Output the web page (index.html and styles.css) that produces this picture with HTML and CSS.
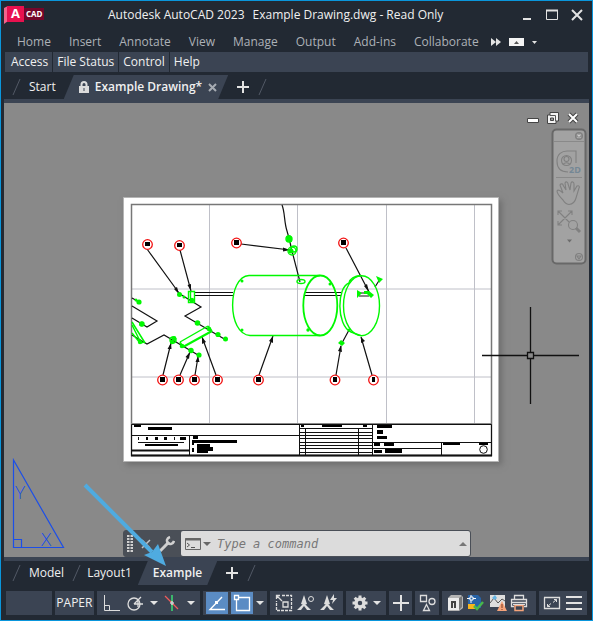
FILE: index.html
```html
<!DOCTYPE html>
<html lang="en">
<head>
<meta charset="utf-8">
<title>Autodesk AutoCAD 2023</title>
<link rel="stylesheet" href="styles.css">
</head>
<body>
<div class="window">
  <header class="titlebar">
    <svg class="logo" width="41" height="20" viewBox="4 6 41 20" aria-label="ACAD">
      <path d="M4 9L8 7V22L4 25Z" fill="#f0648c"/>
      <path d="M7 7H24V23H7Z" fill="#e8114f"/>
      <path d="M24 9H44V21H24Z" fill="#74062a"/>
      <text x="11" y="19" class="logo-a">A</text>
      <text x="26" y="18" class="logo-cad">CAD</text>
    </svg>
    <h1 class="title"><span>Autodesk AutoCAD 2023</span><span>Example Drawing.dwg - Read Only</span></h1>
    <div class="window-buttons">
      <button aria-label="Minimize"><svg width="12" height="12"><path d="M2 10H10" stroke="#e3e3e3" stroke-width="2"/></svg></button>
      <button aria-label="Maximize"><svg width="12" height="12"><path d="M.5 1.5H11.500V10.500H.5Z" fill="none" stroke="#e3e3e3"/><path d="M0 1.500H12" stroke="#e3e3e3" stroke-width="2"/></svg></button>
      <button aria-label="Close"><svg width="12" height="12"><path d="M1 1L11 11M11 1L1 11" stroke="#e3e3e3" stroke-width="2"/></svg></button>
    </div>
  </header>
  <nav class="ribbon">
    <button>Home</button><button>Insert</button><button>Annotate</button><button>View</button><button>Manage</button><button>Output</button><button>Add-ins</button><button>Collaborate</button>
    <span class="ribbon-tools">
      <button aria-label="More tabs"><svg width="10" height="8"><path d="M0 0L5 4L0 8ZM5 0L10 4L5 8Z" fill="#e3e3e3"/></svg></button>
      <button aria-label="Minimize ribbon"><svg width="15" height="8"><path d="M0 0H15V8H0Z" fill="#f4f4f4"/><path d="M5 6L7.500 3L10 6Z" fill="#555"/></svg></button>
      <button aria-label="Ribbon options"><svg width="5" height="8"><path d="M0 3H5L2.500 6Z" fill="#e3e3e3"/></svg></button>
    </span>
  </nav>
  <nav class="panels"><button>Access</button><button>File Status</button><button>Control</button><button>Help</button></nav>

  <div class="tabs file-tabs">
    <svg class="slash" width="9" height="16"><path d="M1 16L8 0" stroke="#525966"/></svg>
    <button class="tab start">Start</button>
    <div class="tab active">
      <svg width="10" height="12"><path d="M2.500 6V3.500a2.500 2.500 0 0 1 5 0V6" fill="none" stroke="#dcdcdc" stroke-width="2"/><path d="M0 5H10V12H0Z" fill="#dcdcdc"/><path d="M5 7V10" stroke="#3b4453"/></svg>
      <button>Example Drawing*</button>
      <button class="close" aria-label="Close drawing"><svg width="9" height="9"><path d="M1 1L8 8M8 1L1 8" stroke="#a7acb3" stroke-width="2"/></svg></button>
    </div>
    <button class="add" aria-label="New drawing"><svg width="12" height="12"><path d="M6 0V12M0 6H12" stroke="#e3e3e3" stroke-width="2"/></svg></button>
    <svg class="slash" width="9" height="16"><path d="M1 16L8 0" stroke="#525966"/></svg>
  </div>

  <main class="canvas">
    <svg class="paper" width="376" height="265" viewBox="123 197 376 265" aria-label="Drawing sheet">
      <path d="M123.500 197.500H498.500V461.500H123.500Z" fill="#fff" stroke="#b5b5b5"/>
      <path d="M209.500 205V423M297.500 205V423M386.500 205V423M474.500 205V423M132 289H491M132 377H491" stroke="#bfc0c8"/>
      <path d="M131.500 204.500H491.500V455.500H131.500Z" fill="none" stroke="#777" stroke-width="1.500"/>

      <g fill="none" stroke="#111" stroke-width="1.200">
        <path d="M147 249L179 293M180 250L191 291M241 244L290 250M346 248L369 292M163 375L171 343M180 375L190 352M195 375L198 357M216 375L202 337M259 375L273 336M336 375L341 346M372 375L361 337"/>
        <path d="M282 205C285 212 284 222 287 231L289 238L292 251L300 282M195 292.500H233M195 295.500H233M305 292.500H341M305 295.500H341M359 293H369M359 296H369M375 287L380 279M349 330L342 343"/>
        <path d="M180 294L201 307L185 316L226 340M132 306L157 321L147 327L132 318M132 335L147 344L164 335L198 355M132 298L139 302"/>
      </g>
      <path d="M179 294L174 289L177 287ZM191 291L187.500 285L191 284ZM290 250L283 251.500V247.500ZM369 292L364 286L367 284ZM171 343L167.500 349H171.500ZM190 352L185.500 357L189 359ZM198 356L195.500 362H199.500ZM202 337L202 344L206 342ZM273 336L269 341L273 343ZM341 345L338 351L342 352ZM361 337L361 343L365 341Z" fill="#111"/>

      <g fill="none" stroke="#00f800" stroke-width="1.400">
        <path d="M320 275.500H249C227 277 227 334 250 335.500H320"/>
        <ellipse cx="320.300" cy="305.500" rx="17" ry="30" stroke-width="1.800"/>
        <ellipse cx="361.500" cy="305.700" rx="18" ry="30"/>
        <path d="M361 275.500C354 276 350 279 349 283C337 287 336 325 351 332L361 335.700"/>
        <ellipse cx="301" cy="281.500" rx="4" ry="2"/>
        <path d="M188.500 291.500H194.500V302.500H188.500ZM190.500 292V302"/>
        <path d="M180 342L208 326"/><path d="M183 347L212 331" stroke-width="2"/>
        <path d="M208 326L212 331M180 342L183 347M132 325L140 341M132 333L140 343L145 342M132 322L145 343" stroke-width="1.500"/>
        <circle cx="289" cy="239" r="3"/><circle cx="292" cy="251" r="4"/><circle cx="294" cy="249" r="3"/>
        <circle cx="142" cy="324" r="2"/><circle cx="173" cy="340" r="3"/>
      </g>
      <g class="fittings" fill="#00f800">
        <circle cx="289" cy="239" r="2.500"/><circle cx="291" cy="251" r="2.500"/><path d="M286 236L290 235L292 238V242L287 241Z"/>
        <circle cx="179.500" cy="294.500" r="2.500"/><circle cx="184" cy="297" r="1.500"/><circle cx="192" cy="300" r="2.200"/>
        <circle cx="139" cy="302" r="2.600"/><circle cx="136" cy="300" r="1.500"/>
        <circle cx="141.500" cy="324" r="2.500"/><circle cx="197.500" cy="323" r="2.800"/><circle cx="209" cy="329" r="2.300"/><circle cx="218" cy="334.500" r="2.600"/><circle cx="225.500" cy="339" r="2.500"/>
        <circle cx="174" cy="338.500" r="2.400"/><circle cx="172" cy="342" r="2.200"/><circle cx="182" cy="346" r="2.300"/><circle cx="191" cy="350.500" r="2.700"/><circle cx="199" cy="355" r="2.600"/><circle cx="140" cy="342" r="2.200"/>
        <circle cx="242" cy="281" r="1.500"/><circle cx="242" cy="330" r="1.500"/><circle cx="330" cy="284" r="1.500"/><circle cx="308" cy="330" r="1.700"/><circle cx="349" cy="330" r="1.500"/>
        <path d="M338 343L341 340L345 343L342 346ZM357 290L362 293L357 298ZM376 276L383 279L379 283ZM364 291H369L374 295L371 298L367 294H364Z"/>
      </g>

      <g fill="#fff" stroke="#f21414" stroke-width="1.300">
        <circle cx="147.500" cy="244.500" r="4.800"/><circle cx="179.500" cy="245.500" r="4.800"/><circle cx="236.500" cy="243" r="4.800"/><circle cx="343.500" cy="243" r="4.800"/>
        <circle cx="162.500" cy="380" r="4.800"/><circle cx="178.500" cy="380" r="4.800"/><circle cx="194.500" cy="380" r="4.800"/><circle cx="217.500" cy="380" r="4.800"/><circle cx="258.500" cy="380" r="4.800"/><circle cx="335" cy="380" r="4.800"/><circle cx="373.500" cy="380" r="4.800"/>
      </g>
      <path d="M145 242h5v4h-5zM177 243h5v4h-5zM234 240h5v5h-5zM341 240h5v5h-5zM160 377h5v5h-5zM176 377h5v5h-5zM192 377h5v5h-5zM215 377h5v5h-5zM256 377h5v5h-5zM333 377h4v5h-4zM372 377h3v5h-3z"/>

      <path d="M131 423.500H491" stroke="#888"/>
      <g fill="none" stroke="#111">
        <path d="M131.500 424.500H491.500V455.500H131.500ZM132 435.500H299M189.500 436V455M372 442.500H491M372 448.500H441M441.500 443V455"/>
        <path d="M299.500 425V455M305.500 428V455M358.500 428V455M372.500 425V455M299 428.500H372M299 432.500H372M299 435.500H372M299 438.500H372M299 442.500H372M299 445.500H372M299 448.500H372M299 452.500H372"/>
        <path d="M131 455.500H492M132 450.500H189" stroke-width="2"/>
        <path d="M138 442.500H184M138.500 437v3M147.500 437v3M156.500 437v3M165.500 437v3M174.500 437v3" />
        <circle cx="483.500" cy="449.500" r="3.800"/>
      </g>
      <path d="M134 425h7v2h-7zM148 427h24v3h-24zM146 437h2v3h-2zM155 437h3v3h-3zM164 437h3v3h-3zM180 437h6v3h-6zM145 444h33v2h-33zM193 436h5v3h-5zM192 440h45v3h-45zM192 443h2v2h-2zM197 444h13v3h-13zM192 448h2v4h-2zM197 447h16v4h-16zM197 451h11v2h-11zM301 425h3v2h-3zM322 425h20v2h-20zM363 425h4v2h-4zM377 425h15v3h-15zM377 430h6v4h-6zM377 436h10v3h-10zM374 443h6v3h-6zM384 443h10v3h-10zM374 450h8v3h-8zM385 449h17v4h-17zM443 443h17v2h-17zM479 443h9v2h-9z"/>
    </svg>

    <svg class="crosshair" width="97" height="97"><path d="M48.500 0V45M48.500 52V97M0 48.500H45M52 48.500H97" stroke="#111" stroke-width="1.300"/><path d="M45.500 45.500H51.500V51.500H45.500Z" fill="none" stroke="#111" stroke-width="1.300"/></svg>

    <div class="view-buttons">
      <svg width="12" height="12"><path d="M.5 6.500H11.500V10.500H.5Z" fill="#fff" stroke="#444"/></svg>
      <svg width="12" height="12"><path d="M3 .5H11.500V9H9V11.500H.5V3H3Z" fill="#f2f2f2" stroke="#444"/><path d="M3 3.500H8.500V9" fill="none" stroke="#555"/><path d="M3.500 6H6.500V8.500H3.500Z" fill="#999" stroke="#444"/></svg>
      <svg width="12" height="12"><path d="M2 2L10 10M10 2L2 10" stroke="#444" stroke-width="4"/><path d="M2 2L10 10M10 2L2 10" stroke="#fff" stroke-width="2"/></svg>
    </div>

    <svg class="navbar" width="36" height="137" viewBox="551 128 36 137" aria-label="Navigation bar">
      <rect x="552.500" y="129.500" width="33" height="134" rx="4" fill="#a2a2a2" stroke="#686868" stroke-width="2"/>
      <path d="M554 141.500H584M556 177.500H582" stroke="#898989"/>
      <g fill="none" stroke="#808080" stroke-width="1.100">
        <circle cx="579" cy="136" r="3.500" fill="#8e8e8e"/><path d="M577.500 134.500L580.500 137.500M580.500 134.500L577.500 137.500" stroke="#ccc"/>
        <path d="M568 172C560 172 557 167 557 161C557 154 562 151 567 151H576V163"/><circle cx="566.500" cy="160.500" r="5"/><circle cx="566.500" cy="159" r="2.500"/><path d="M563 165C564 162 569 162 570 165"/>
        <path d="M563 200C559 196 557 193 557 191C558 189 561 191 563 193L560 185C561 183 563 184 563 185L566 190L565 183C566 181 568 182 568 184L570 190L571 183C572 181 574 182 574 184V191L577 186C579 185 580 187 579 188L576 198C575 202 573 204 569 204.500C566 204 564 202 563 200Z"/>
        <path d="M558 211L572 225M572 211L558 225M558 215V211H562M568 211H572V215M558 221V225H562"/><circle cx="573" cy="225" r="4.500" fill="#a2a2a2"/><path d="M576 228L580 232" stroke-width="3"/>
        <circle cx="579" cy="257" r="3.500"/><path d="M577 256H581L579 259Z"/>
      </g>
      <path d="M567 239.500H572L569.500 242.500Z" fill="#6c6c6c"/>
      <text x="569" y="173" class="two-d">2D</text>
    </svg>

    <svg class="ucs" width="54" height="98" viewBox="11 458 54 98" aria-label="UCS icon">
      <path d="M13.500 460V547.500H63.500ZM13.500 539.500H21.500V547.500" fill="none" stroke="#1c4fe8" stroke-width="1.200"/>
      <text x="15" y="499">Y</text><text x="41" y="546">X</text>
    </svg>

    <div class="command">
      <div class="command-tools">
        <svg width="6" height="18"><path d="M1 0V18M5 0V18" stroke="#d0d0d0" stroke-width="2" stroke-dasharray="2 1"/><path d="M3 0V18" stroke="#d0d0d0" stroke-dasharray="2 1"/></svg>
        <button aria-label="Close command line"><svg width="10" height="10"><path d="M1 1L9 9M9 1L1 9" stroke="#c4c4c4" stroke-width="1.500"/></svg></button>
        <button aria-label="Customize"><svg width="16" height="16"><path d="M1 15L10 6" stroke="#d0d0d0" stroke-width="3"/><path d="M11 1C8 2 7 5 9 7C11 9 14 8 15 5" fill="none" stroke="#d0d0d0" stroke-width="2.500"/></svg></button>
      </div>
      <div class="command-field">
        <svg width="26" height="12"><path d="M.5 .5H15.500V11.500H.5Z" fill="none" stroke="#666"/><path d="M0 1.500H16" stroke="#666" stroke-width="2"/><path d="M2 5L4.500 7L2 9M6 9.500H10" fill="none" stroke="#555"/><path d="M18 4H26L22 8Z" fill="#666"/></svg>
        <input type="text" placeholder="Type a command" aria-label="Command">
        <button aria-label="Command history"><svg width="8" height="4"><path d="M0 4L4 0L8 4Z" fill="#777"/></svg></button>
      </div>
    </div>

    <svg class="pointer" width="84" height="84" viewBox="83 483 84 84"><path d="M85 485L152 552" stroke="#4fabe0" stroke-width="4"/><path d="M166 566L144 555L152 552L158 544Z" fill="#4fabe0"/></svg>
  </main>

  <div class="tabs layout-tabs">
    <svg class="slash" width="9" height="16"><path d="M1 16L8 0" stroke="#525966"/></svg>
    <button class="tab model">Model</button>
    <svg class="slash" width="9" height="16"><path d="M1 16L8 0" stroke="#525966"/></svg>
    <button class="tab layout">Layout1</button>
    <button class="tab active">Example</button>
    <button class="add" aria-label="New layout"><svg width="12" height="12"><path d="M6 0V12M0 6H12" stroke="#e3e3e3" stroke-width="2"/></svg></button>
    <svg class="slash" width="9" height="16"><path d="M1 16L8 0" stroke="#525966"/></svg>
  </div>

  <footer class="status">
    <div class="group coords"></div>
    <div class="group paper-mode"><button>PAPER</button></div>
    <div class="group modes">
      <button aria-label="Ortho"><svg width="18" height="18"><path d="M1.500 1V16.500H17M1.500 11.500H6.500V16.500" fill="none" stroke="#ddd"/></svg></button>
      <button aria-label="Polar"><svg width="18" height="18"><circle cx="8" cy="10" r="6" fill="none" stroke="#ddd" stroke-width="1.300"/><path d="M8 10H17M8 10L15 3M12 7V13" fill="none" stroke="#ddd" stroke-width="1.300"/></svg></button>
      <button class="caret" aria-label="Polar settings"><svg width="8" height="4"><path d="M0 0H8L4 4Z" fill="#e3e3e3"/></svg></button>
      <button aria-label="Isodraft"><svg width="18" height="18"><path d="M9 1V17" stroke="#3ddc74" stroke-width="1.500"/><path d="M2 2L15 15" stroke="#ef5b5b" stroke-width="1.300"/><path d="M8 8H10V10H8Z" fill="#222933" stroke="#fff"/></svg></button>
      <button class="caret" aria-label="Isodraft settings"><svg width="8" height="4"><path d="M0 0H8L4 4Z" fill="#e3e3e3"/></svg></button>
    </div>
    <div class="group snaps">
      <button class="on" aria-label="Object tracking"><svg width="18" height="18"><path d="M14 3L2 15.500H17" fill="none" stroke="#fff" stroke-width="1.400"/><path d="M7 7H10V10H7Z" fill="#fff"/></svg></button>
      <button class="on" aria-label="Object snap"><svg width="18" height="18"><path d="M6 3.500H16.500V16.500H3.500V6M1.500 1.500H5.500V5.500H1.500Z" fill="none" stroke="#fff" stroke-width="1.300"/></svg></button>
      <button class="caret" aria-label="Snap settings"><svg width="8" height="4"><path d="M0 0H8L4 4Z" fill="#e3e3e3"/></svg></button>
    </div>
    <div class="group notes">
      <button aria-label="Annotation scale"><svg width="18" height="18"><path d="M7 1.500H16.500V16.500H1.500V7" fill="none" stroke="#ddd" stroke-width="1.300" stroke-dasharray="3 1"/><path d="M8 8H13V13H8ZM7 7L2 2M1.500 5V1.500H5" fill="none" stroke="#ddd" stroke-width="1.300"/></svg></button>
      <button aria-label="Annotation visibility"><svg width="18" height="18"><path d="M7 1L10 10L7 11L4 10Z" fill="#ddd"/><path d="M7 9L14 16H10L7 12L4 16H0Z" fill="#ddd"/><circle cx="14" cy="5" r="2.500" fill="none" stroke="#ddd"/></svg></button>
      <button aria-label="Auto scale"><svg width="18" height="18"><path d="M7 1L10 10L7 11L4 10Z" fill="#ddd"/><path d="M7 9L14 16H10L7 12L4 16H0Z" fill="#ddd"/><path d="M14 0L10 6H13L12 10L17 4H14Z" fill="#ddd"/></svg></button>
    </div>
    <div class="group gear">
      <button aria-label="Workspace"><svg width="18" height="18"><circle cx="9" cy="9" r="4" fill="none" stroke="#ddd" stroke-width="3.500"/><path d="M9 1.500V4M9 14V16.500M1.500 9H4M14 9H16.500M3.700 3.700L5.500 5.500M12.500 12.500L14.300 14.300M14.300 3.700L12.500 5.500M5.500 12.500L3.700 14.300" stroke="#ddd" stroke-width="3"/></svg></button>
      <button class="caret" aria-label="Workspace settings"><svg width="8" height="4"><path d="M0 0H8L4 4Z" fill="#e3e3e3"/></svg></button>
    </div>
    <div class="group"><button aria-label="Annotation monitor"><svg width="18" height="18"><path d="M9 1V17M1 9H17" stroke="#e3e3e3" stroke-width="2"/></svg></button></div>
    <div class="group"><button aria-label="Isolate objects"><svg width="18" height="18"><path d="M2.500 1.500H8.500V7.500H2.500ZM8.500 10.500L11.500 16.500H5.500Z" fill="none" stroke="#ddd" stroke-width="1.300"/><circle cx="14" cy="7.500" r="3" fill="none" stroke="#ddd" stroke-width="1.300"/></svg></button></div>
    <div class="group tools">
      <button aria-label="Graphics performance"><svg width="18" height="18"><path d="M2 4L5 1H15L17 3V14L13 17H2Z" fill="#b4b4b4"/><path d="M2 4H13V16H2Z" fill="#ececec"/><path d="M5 14V7H10V14H8V9H7V14Z" fill="#444"/><path d="M13 4L16 2V13L13 16Z" fill="#777"/></svg></button>
      <button aria-label="File checked"><svg width="18" height="18"><path d="M1 1H11L14 4V14H1Z" fill="#2864a8"/><path d="M1 10H8V15H1Z" fill="#f8b51c"/><path d="M4 1V9M0 4.500H9" stroke="#fff"/><path d="M3 3H6V6H3Z" fill="#2864a8" stroke="#fff"/><path d="M7 12L10 15L16 8" fill="none" stroke="#48b84c" stroke-width="2.500"/></svg></button>
      <button aria-label="Trace"><svg width="18" height="18"><path d="M1 1H16V13H1Z" fill="#dedede"/><path d="M1 9L5 4L9 9L13 5L16 7" fill="none" stroke="#555"/><path d="M3 4L6 1L8 4L6 6Z" fill="#66b5e5"/><path d="M13 7L18 17H8Z" fill="#f5a37a"/><path d="M13 10V14M13 15V16" stroke="#7b3a20"/></svg></button>
      <button aria-label="Plot"><svg width="18" height="18"><path d="M4.500 5V1.500H13.500V5M4 12.500H1.500V5.500H16.500V12.500H14M2 8.500H16" fill="none" stroke="#ddd" stroke-width="1.300"/><path d="M5 11.500H13V16.500H5Z" fill="#3b4453" stroke="#f5a37a" stroke-width="1.500"/><path d="M3 10.500H15" stroke="#ddd"/></svg></button>
    </div>
    <div class="group ends">
      <button aria-label="Clean screen"><svg width="18" height="18"><path d="M1 3.500H16.500V14.500H1.500V3.500" fill="none" stroke="#ddd" stroke-width="1.300"/><path d="M10 8.500L13.500 5.500M11 5.500H13.500V8M8 9.500L4.500 12.500M4.500 10V12.500H7" fill="none" stroke="#ddd"/></svg></button>
      <button aria-label="Customization"><svg width="18" height="18"><path d="M1 3H17M1 9H17M1 15H17" stroke="#e3e3e3" stroke-width="2"/></svg></button>
    </div>
  </footer>
</div>
</body>
</html>
```
FILE: styles.css
```css
* { box-sizing: border-box; }
body { margin: 0; font-family: "Open Sans", "Noto Sans", sans-serif; font-size: 12px; line-height: 16px; color: #f0f0f0; background: #222933; }
button { margin: 0; padding: 0; border: 0; background: none; color: inherit; font: inherit; white-space: nowrap; }
svg { display: block; flex: none; }

.window { display: flex; flex-direction: column; min-height: 100vh; border: 1px solid #0a96dc; background: #222933; }

.titlebar { display: flex; align-items: center; height: 28px; padding: 0 9px 0 3px; }
.title { display: flex; flex: 1; gap: 8px; margin: 0 0 0 63px; font-size: 12px; font-weight: 400; white-space: nowrap; }
.window-buttons { display: flex; gap: 13px; }
.logo-a { font: 700 13px "Open Sans", sans-serif; fill: #fff; }
.logo-cad { font: 700 8px "Open Sans", sans-serif; fill: #fff; }

.ribbon { display: flex; align-items: center; gap: 18px; height: 23px; padding: 2px 0 0 16px; color: #adb1b7; }
.ribbon-tools { display: flex; align-items: center; gap: 8px; margin-left: -6px; }

.panels { display: flex; height: 20px; margin: 0 4px; padding-left: 2px; background: #3b4453; }
.panels button { padding: 0 4px; border-right: 1px solid #222933; }
.panels button:last-child { border-right: 0; }

.tabs { display: flex; align-items: center; height: 24px; padding-left: 11px; }
.file-tabs { margin-top: 3px; }
.tab.start, .tab.model { padding: 0 8px; }
.tab.layout { padding: 0 6px; }
.tab.active { display: flex; align-items: center; gap: 6px; height: 24px; background: #3b4453; font-weight: 600; clip-path: polygon(10px 0, 100% 0, calc(100% - 10px) 100%, 0 100%); }
.file-tabs .active { padding: 0 11px 0 15px; }
.layout-tabs .active { padding: 0 15px; }
.tabs .add { margin: 0 9px; }

.canvas { position: relative; flex: 1; min-height: 462px; margin: 0 3px; border: solid #3b4453; border-width: 4px 0; background: #898989; }
.paper { position: absolute; left: 119px; top: 94px; box-shadow: 3px 3px 6px #6e6e6e; }
.crosshair { position: absolute; left: 478px; top: 204px; }
.view-buttons { position: absolute; display: flex; gap: 8px; right: 10px; top: 9px; }
.navbar { position: absolute; right: 2px; top: 25px; }
.two-d { font: 700 9px "Open Sans", sans-serif; fill: #748795; }
.ucs { position: absolute; left: 7px; bottom: 1px; }
.ucs text { font: 300 19px "Open Sans", sans-serif; fill: #1c4fe8; }
.pointer { position: absolute; left: 79px; bottom: -10px; z-index: 2; }

.command { position: absolute; display: flex; left: 119px; right: 118px; bottom: 0; height: 27px; border: 1px solid #4a4f57; border-radius: 3px; background: #4a4f57; }
.command-tools { display: flex; align-items: center; gap: 8px; padding: 0 6px 0 3px; }
.command-field { display: flex; flex: 1; align-items: center; gap: 6px; padding: 0 3px 0 4px; border-radius: 2px; background: #dcdcdc; }
.command-field input { flex: 1; min-width: 0; padding: 0; border: 0; outline: 0; background: none; font: italic 12px "DejaVu Sans Mono", monospace; color: #333; }
.command-field input::placeholder { color: #777; opacity: 1; }

.status { display: flex; gap: 3px; height: 24px; margin: 6px 5px 5px; }
.group { display: flex; align-items: center; justify-content: space-evenly; flex: 24 1 0; min-width: 0; background: #3b4453; }
.group.coords { flex-grow: 46; }
.group.paper-mode { flex-grow: 40; }
.group.modes { flex-grow: 104; }
.group.snaps { flex-grow: 64; }
.group.notes { flex-grow: 74; }
.group.gear { flex-grow: 40; }
.group.tools { flex-grow: 90; padding-right: 5px; }
.group.ends { flex-grow: 48; }
.group .on { display: grid; place-items: center; width: 22px; height: 22px; background: #5b8cc4; }
```
